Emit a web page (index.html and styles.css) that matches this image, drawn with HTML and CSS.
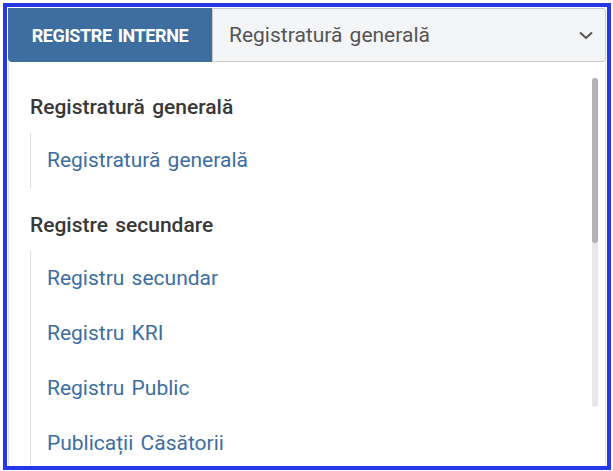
FILE: index.html
```html
<!DOCTYPE html>
<html lang="ro">
<head>
    <meta charset="UTF-8">
    <meta name="viewport" content="width=device-width, initial-scale=1.0">
    <title>Registre interne</title>
    <link rel="stylesheet" href="styles.css">
</head>
<body>
    <div class="frame">
        <div class="bar">
            <div class="label">REGISTRE INTERNE</div>
            <div class="select">
                <span>Registratură generală</span>
                <svg class="chevron" width="14" height="9" viewBox="0 0 14 9">
                    <path d="M1 1.5 L7 7 L13 1.5" fill="none" stroke="#555" stroke-width="2"/>
                </svg>
            </div>
        </div>

        <div class="panel">
            <div class="group">Registratură generală</div>
            <ul class="items">
                <li>Registratură generală</li>
            </ul>

            <div class="group">Registre secundare</div>
            <ul class="items">
                <li>Registru secundar</li>
                <li>Registru KRI</li>
                <li>Registru Public</li>
                <li>Publicații Căsătorii</li>
            </ul>

            <div class="scrollbar">
                <div class="thumb"></div>
            </div>
        </div>
    </div>
</body>
</html>
```

FILE: styles.css
```css
body {
    margin: 0;
    font-family: Roboto, "Liberation Sans", sans-serif;
    background: #fff;
    overflow: hidden;
}

.frame {
    margin: 3px;
    width: 598px;
    height: 457px;
    padding: 1px;
    border: 4px solid #2538e8;
    overflow: hidden;
}

.bar {
    display: flex;
    height: 54px;
}

.label {
    width: 204px;
    background: #3e6e9f;
    color: #fff;
    font-weight: bold;
    font-size: 18px;
    letter-spacing: -0.4px;
    word-spacing: 2px;
    display: flex;
    align-items: center;
    justify-content: center;
    border-radius: 0 0 0 4px;
}

.select {
    flex: 1;
    display: flex;
    align-items: center;
    justify-content: space-between;
    background: #f4f5f7;
    border: 1px solid #c9cacc;
    border-radius: 0 3px 3px 0;
    padding: 0 12px 0 16px;
    color: #555;
    font-size: 21px;
    word-spacing: 2px;
}

.panel {
    position: relative;
    height: 403px;
    background: #fff;
    border-left: 1px solid #e3e3e3;
    border-right: 1px solid #e3e3e3;
    padding: 8px 0 0 21px;
}

.group {
    margin: 26px 0 15px;
    line-height: 22px;
    font-size: 21px;
    font-weight: 500;
    color: #383838;
    word-spacing: 2px;
}

.items {
    list-style: none;
    margin: 0;
    padding: 0;
    border-left: 1px solid #dedede;
}

.items li {
    height: 55px;
    line-height: 55px;
    padding-left: 16px;
    font-size: 21px;
    color: #3d6ea3;
    word-spacing: 2px;
}

.scrollbar {
    position: absolute;
    top: 16px;
    right: 7px;
    width: 6px;
    height: 329px;
    background: #e8e8e8;
    border-radius: 3px;
}

.thumb {
    height: 165px;
    background: #b3b3b3;
    border-radius: 3px;
}
```
